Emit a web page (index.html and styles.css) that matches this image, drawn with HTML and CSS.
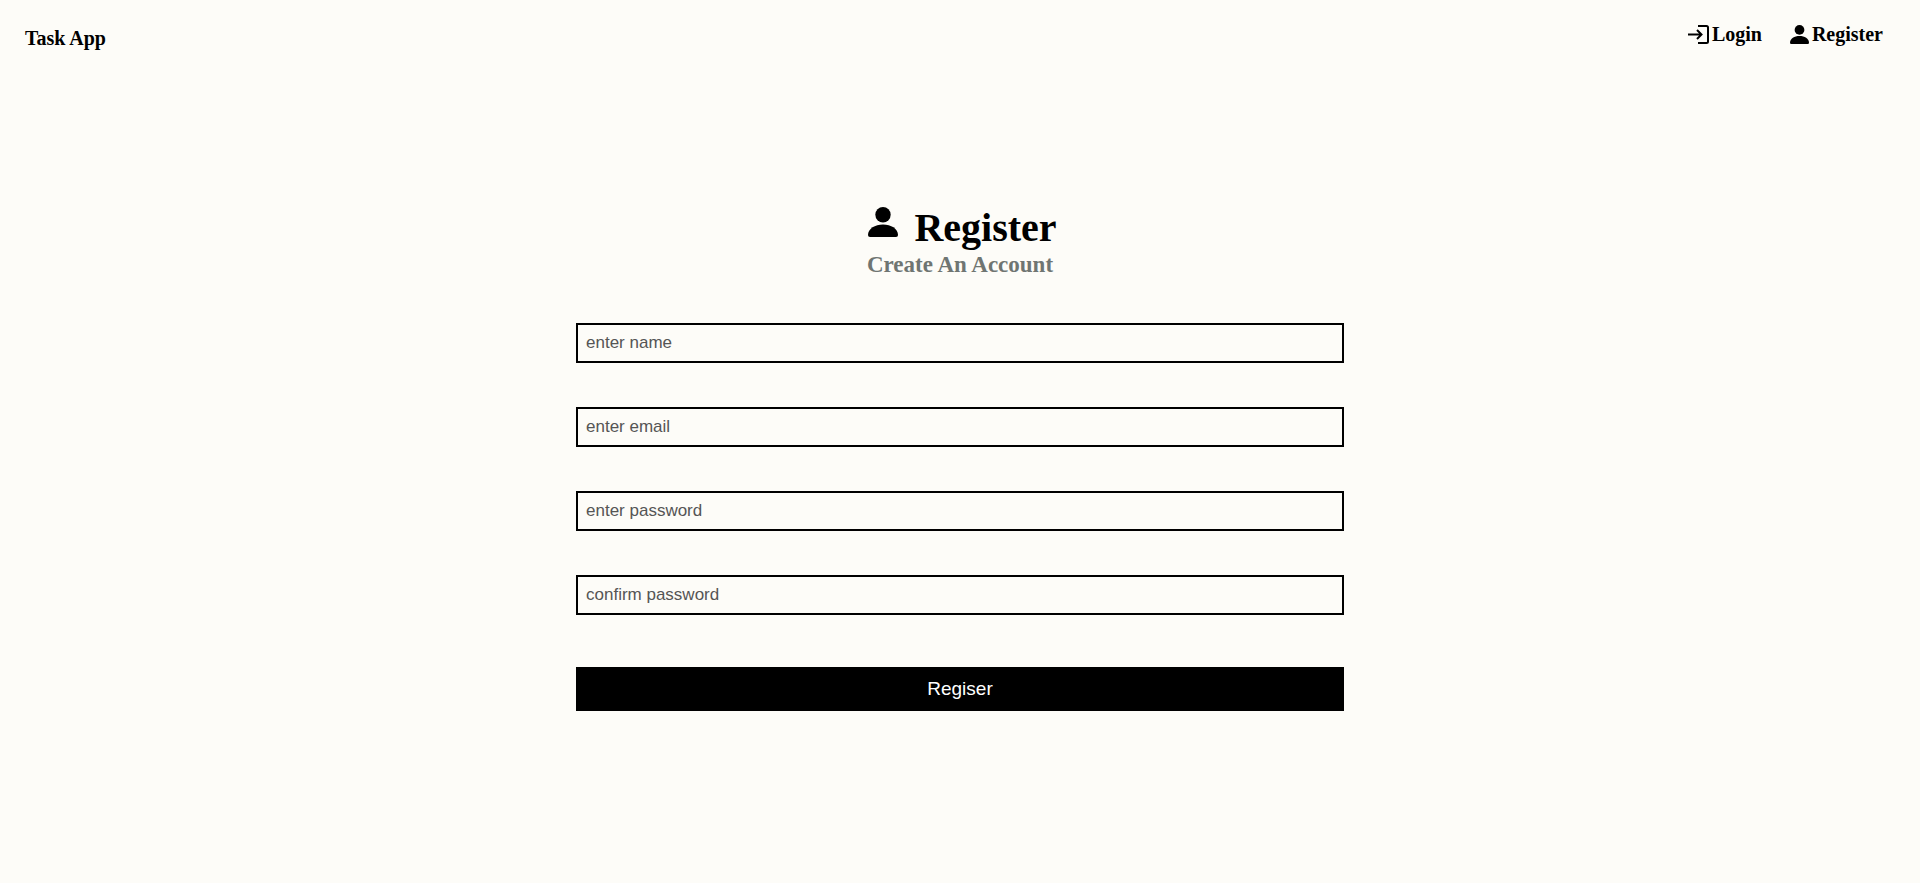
FILE: index.html
```html
<!DOCTYPE html>
<html lang="en">
<head>
<meta charset="utf-8">
<title>Task App</title>
<link rel="stylesheet" href="styles.css">
</head>
<body>
<svg class="sprite" aria-hidden="true">
  <symbol id="person" viewBox="0 0 30 30">
    <circle cx="15" cy="7.7" r="7.7"/>
    <path d="M2 30Q0 30 0 28C0 21.500 7 17.400 15 17.400S30 21.500 30 28Q30 30 28 30Z"/>
  </symbol>
</svg>
<header class="header">
  <a class="brand" href="#">Task App</a>
  <nav class="nav">
    <a class="nav-link" href="#login"><svg class="icon-login" viewBox="0 0 21 19" aria-hidden="true"><path d="M10 1H18.500Q20 1 20 2.500V16.500Q20 18 18.500 18H10M0 9.500H13.500M9 5L13.500 9.500L9 14"/></svg>Login</a>
    <a class="nav-link" href="#register"><svg class="icon-person" aria-hidden="true"><use href="#person"/></svg>Register</a>
  </nav>
</header>
<main class="main">
  <section class="heading">
    <h1 class="title"><svg class="title-icon" aria-hidden="true"><use href="#person"/></svg>Register</h1>
    <p class="subtitle">Create An Account</p>
  </section>
  <form class="form">
    <input class="field" type="text" name="name" aria-label="Name" placeholder="enter name">
    <input class="field" type="email" name="email" aria-label="Email" placeholder="enter email">
    <input class="field" type="password" name="password" aria-label="Password" placeholder="enter password">
    <input class="field" type="password" name="confirm" aria-label="Confirm password" placeholder="confirm password">
    <button class="submit" type="submit">Regiser</button>
  </form>
</main>
</body>
</html>
```
FILE: styles.css
```css
* {
  box-sizing: border-box;
  margin: 0;
  padding: 0;
}

body {
  background: #fdfcf8;
  color: #000;
  font-family: "Liberation Serif", "Times New Roman", serif;
}

a {
  color: inherit;
  text-decoration: none;
}

.sprite {
  display: none;
}

.header {
  display: flex;
  justify-content: space-between;
  align-items: flex-start;
  padding: 22px 37px 0 25px;
  font-size: 20px;
  line-height: 24px;
  font-weight: bold;
}

.brand {
  padding-top: 4px;
}

.nav {
  display: flex;
  gap: 28px;
}

.nav-link {
  display: flex;
  align-items: center;
  gap: 3px;
}

.icon-login {
  width: 21px;
  height: 19px;
  fill: none;
  stroke: currentColor;
  stroke-width: 2;
}

.icon-person {
  width: 19px;
  height: 19px;
}

.main {
  padding-top: 154px;
}

.heading {
  text-align: center;
}

.title {
  display: flex;
  justify-content: center;
  gap: 16px;
  padding-left: 5px;
  font-size: 40px;
  line-height: 48px;
}

.title-icon {
  width: 30px;
  height: 30px;
  margin-top: 3px;
}

.subtitle {
  color: #6f7572;
  font-size: 23px;
  line-height: 26px;
  font-weight: bold;
}

.form {
  display: flex;
  flex-direction: column;
  gap: 44px;
  width: 40%;
  margin: 45px auto 0;
}

.field {
  height: 40px;
  padding: 0 8px;
  border: 2px solid #000;
  background: transparent;
  font-family: "Liberation Sans", Arial, sans-serif;
  font-size: 17px;
}

.field::placeholder {
  color: #555;
}

.submit {
  height: 44px;
  margin-top: 8px;
  border: 0;
  background: #000;
  color: #fff;
  font-family: "Liberation Sans", Arial, sans-serif;
  font-size: 19px;
}
```
